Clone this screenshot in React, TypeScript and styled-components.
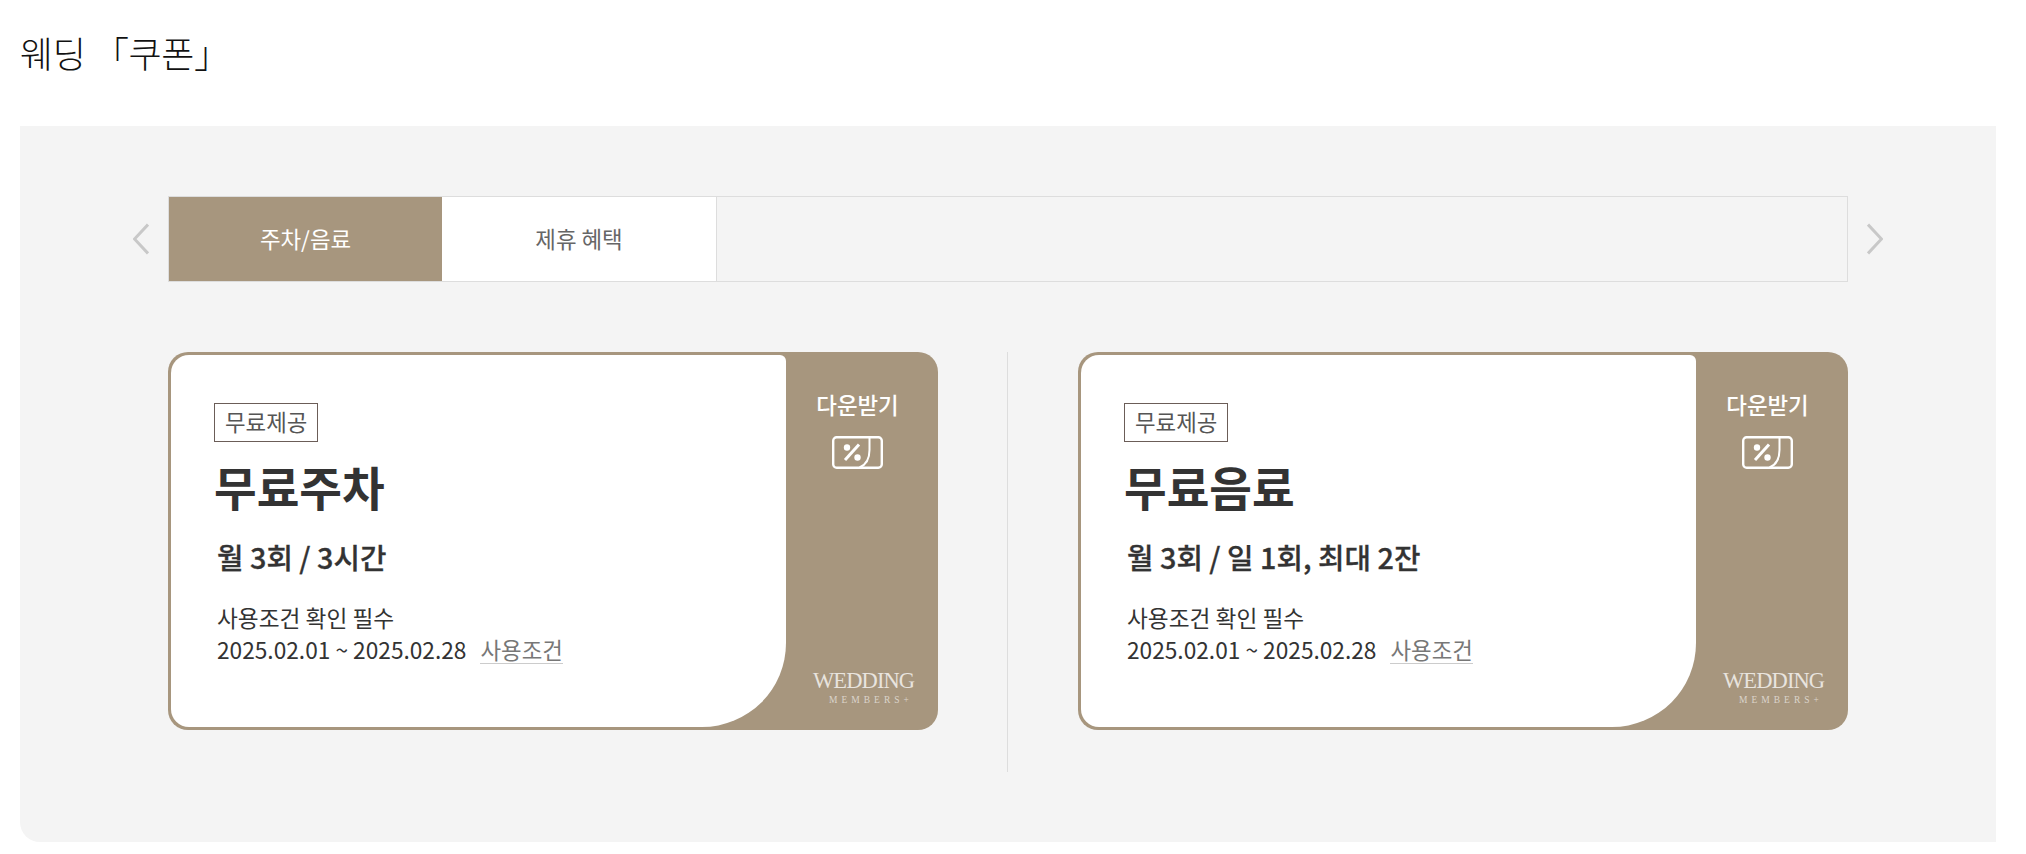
import React from "react";
import styled, { createGlobalStyle } from "styled-components";

const GlobalStyle = createGlobalStyle`
  html, body {
    margin: 0;
    padding: 0;
    background: #fff;
    font-family: "Noto Sans CJK KR", "Noto Sans", sans-serif;
    color: #333;
  }
`;

const Page = styled.div`
  padding: 0 30px 12px 20px;
`;

const Heading = styled.h2`
  margin: 0;
  height: 126px;
  padding-top: 25px;
  box-sizing: border-box;
  font-size: 36px;
  line-height: 54px;
  font-weight: 300;
  letter-spacing: -0.4px;
  color: #111;
`;

const Panel = styled.section`
  height: 716px;
  box-sizing: border-box;
  padding: 70px 94px 0;
  background: #f4f4f4;
  border-radius: 0 0 0 20px;
`;

const TabRow = styled.div`
  display: flex;
  align-items: center;
`;

const Arrow = styled.button`
  width: 54px;
  height: 40px;
  padding: 0;
  border: 0;
  background: none;
  display: flex;
  align-items: center;
  justify-content: center;
`;

const TabList = styled.ul`
  flex: 1;
  display: flex;
  margin: 0;
  padding: 0;
  list-style: none;
  height: 86px;
  box-sizing: border-box;
  border: 1px solid #ddd;
`;

const Tab = styled.li<{ $active?: boolean }>`
  width: ${(p) => (p.$active ? "273px" : "275px")};
  padding-bottom: 2px;
  display: flex;
  align-items: center;
  justify-content: center;
  box-sizing: border-box;
  font-size: 22.4px;
  background: ${(p) => (p.$active ? "#a7967e" : "#fff")};
  color: ${(p) => (p.$active ? "#fff" : "#666")};
  border-right: ${(p) => (p.$active ? "0" : "1px solid #ddd")};
`;

const CouponGrid = styled.div`
  display: grid;
  grid-template-columns: 770px 770px;
  column-gap: 140px;
  margin: 70px 54px 0;
  position: relative;
`;

const Divider = styled.div`
  position: absolute;
  left: 839px;
  top: 0;
  width: 1px;
  height: 420px;
  background: #ddd;
`;

const Coupon = styled.article`
  display: flex;
  height: 378px;
  box-sizing: border-box;
  padding: 3px 0 3px 3px;
  background: #a7967e;
  border-radius: 20px;
`;

const CouponBody = styled.div`
  width: 615px;
  box-sizing: border-box;
  padding: 48px 0 0 43px;
  background: #fff;
  border-radius: 18px 6px 84px 18px;
`;

const Tag = styled.span`
  display: inline-block;
  box-sizing: border-box;
  height: 39px;
  padding: 0 10px;
  border: 1px solid #6b5d58;
  font-size: 22.4px;
  line-height: 35px;
  color: #555;
`;

const Title = styled.h3`
  margin: 10px 0 0;
  font-size: 46.4px;
  line-height: 68px;
  font-weight: 700;
  color: #333;
`;

const Benefit = styled.p`
  margin: 16px 0 0 3px;
  font-size: 28.8px;
  line-height: 42px;
  font-weight: 500;
  color: #333;
  -webkit-text-stroke: 0.3px #333;
`;

const Info = styled.p`
  margin: 24px 0 0 3px;
  font-size: 22.7px;
  line-height: 32px;
  color: #333;
`;

const TermsLink = styled.a`
  display: inline-block;
  margin-left: 14px;
  font-size: 22.4px;
  line-height: 28px;
  color: #777;
  border-bottom: 1px solid #ccc;
`;

const CouponSide = styled.div`
  flex: 1;
  display: flex;
  flex-direction: column;
  align-items: center;
  position: relative;
  padding: 33px 9px 0 0;
  color: #fff;
`;

const Download = styled.a`
  font-size: 22.4px;
  line-height: 33px;
  font-weight: 500;
`;

const TicketSvg = styled.svg`
  display: block;
  margin: 15px 1px 0 0;
`;

const Logo = styled.div`
  position: absolute;
  left: 27px;
  top: 316px;
  width: 101px;
  text-align: center;
  color: rgba(255, 255, 255, 0.75);
  font-family: "Liberation Serif", serif;
`;

const LogoMain = styled.div`
  font-size: 22.5px;
  line-height: 20px;
  letter-spacing: -0.9px;
  white-space: nowrap;
`;

const LogoSub = styled.div`
  margin: 3px 0 0 15px;
  font-size: 9.5px;
  line-height: 12px;
  letter-spacing: 4px;
  white-space: nowrap;
  color: rgba(255, 255, 255, 0.6);
`;

const ChevronLeft = () => (
  <svg width="16" height="32" viewBox="0 0 16 32" fill="none">
    <path d="M15 1.5 1.5 16 15 30.5" stroke="#c8c8c8" strokeWidth="3" />
  </svg>
);

const ChevronRight = () => (
  <svg width="16" height="32" viewBox="0 0 16 32" fill="none">
    <path d="M1 1.5 14.5 16 1 30.5" stroke="#c8c8c8" strokeWidth="3" />
  </svg>
);

const TicketIcon = () => (
  <TicketSvg width="51" height="33" viewBox="0 0 51 33" fill="none">
    <rect x="1.2" y="1.2" width="48.6" height="30.6" rx="3.5" stroke="#fff" strokeWidth="2.4" />
    <path d="M37.5 1.5V14c0 9-4 15-10 17.5" stroke="#fff" strokeWidth="2" />
    <path d="M13 24 27 8.5" stroke="#fff" strokeWidth="3" />
    <circle cx="15" cy="11.5" r="3.2" fill="#fff" />
    <circle cx="25.5" cy="21.5" r="3.2" fill="#fff" />
  </TicketSvg>
);

const coupons = [
  { title: "무료주차", benefit: "월 3회 / 3시간" },
  { title: "무료음료", benefit: "월 3회 / 일 1회, 최대 2잔" },
];

const App: React.FC = () => {
  return (
    <Page>
      <GlobalStyle />
      <Heading>웨딩 「쿠폰」</Heading>
      <Panel>
        <TabRow>
          <Arrow aria-label="prev">
            <ChevronLeft />
          </Arrow>
          <TabList>
            <Tab $active>주차/음료</Tab>
            <Tab>제휴 혜택</Tab>
          </TabList>
          <Arrow aria-label="next">
            <ChevronRight />
          </Arrow>
        </TabRow>
        <CouponGrid>
          <Divider />
          {coupons.map((c) => (
            <Coupon key={c.title}>
              <CouponBody>
                <Tag>무료제공</Tag>
                <Title>{c.title}</Title>
                <Benefit>{c.benefit}</Benefit>
                <Info>
                  사용조건 확인 필수
                  <br />
                  2025.02.01 ~ 2025.02.28
                  <TermsLink>사용조건</TermsLink>
                </Info>
              </CouponBody>
              <CouponSide>
                <Download>다운받기</Download>
                <TicketIcon />
                <Logo>
                  <LogoMain>WEDDING</LogoMain>
                  <LogoSub>MEMBERS+</LogoSub>
                </Logo>
              </CouponSide>
            </Coupon>
          ))}
        </CouponGrid>
      </Panel>
    </Page>
  );
};

export default App;
